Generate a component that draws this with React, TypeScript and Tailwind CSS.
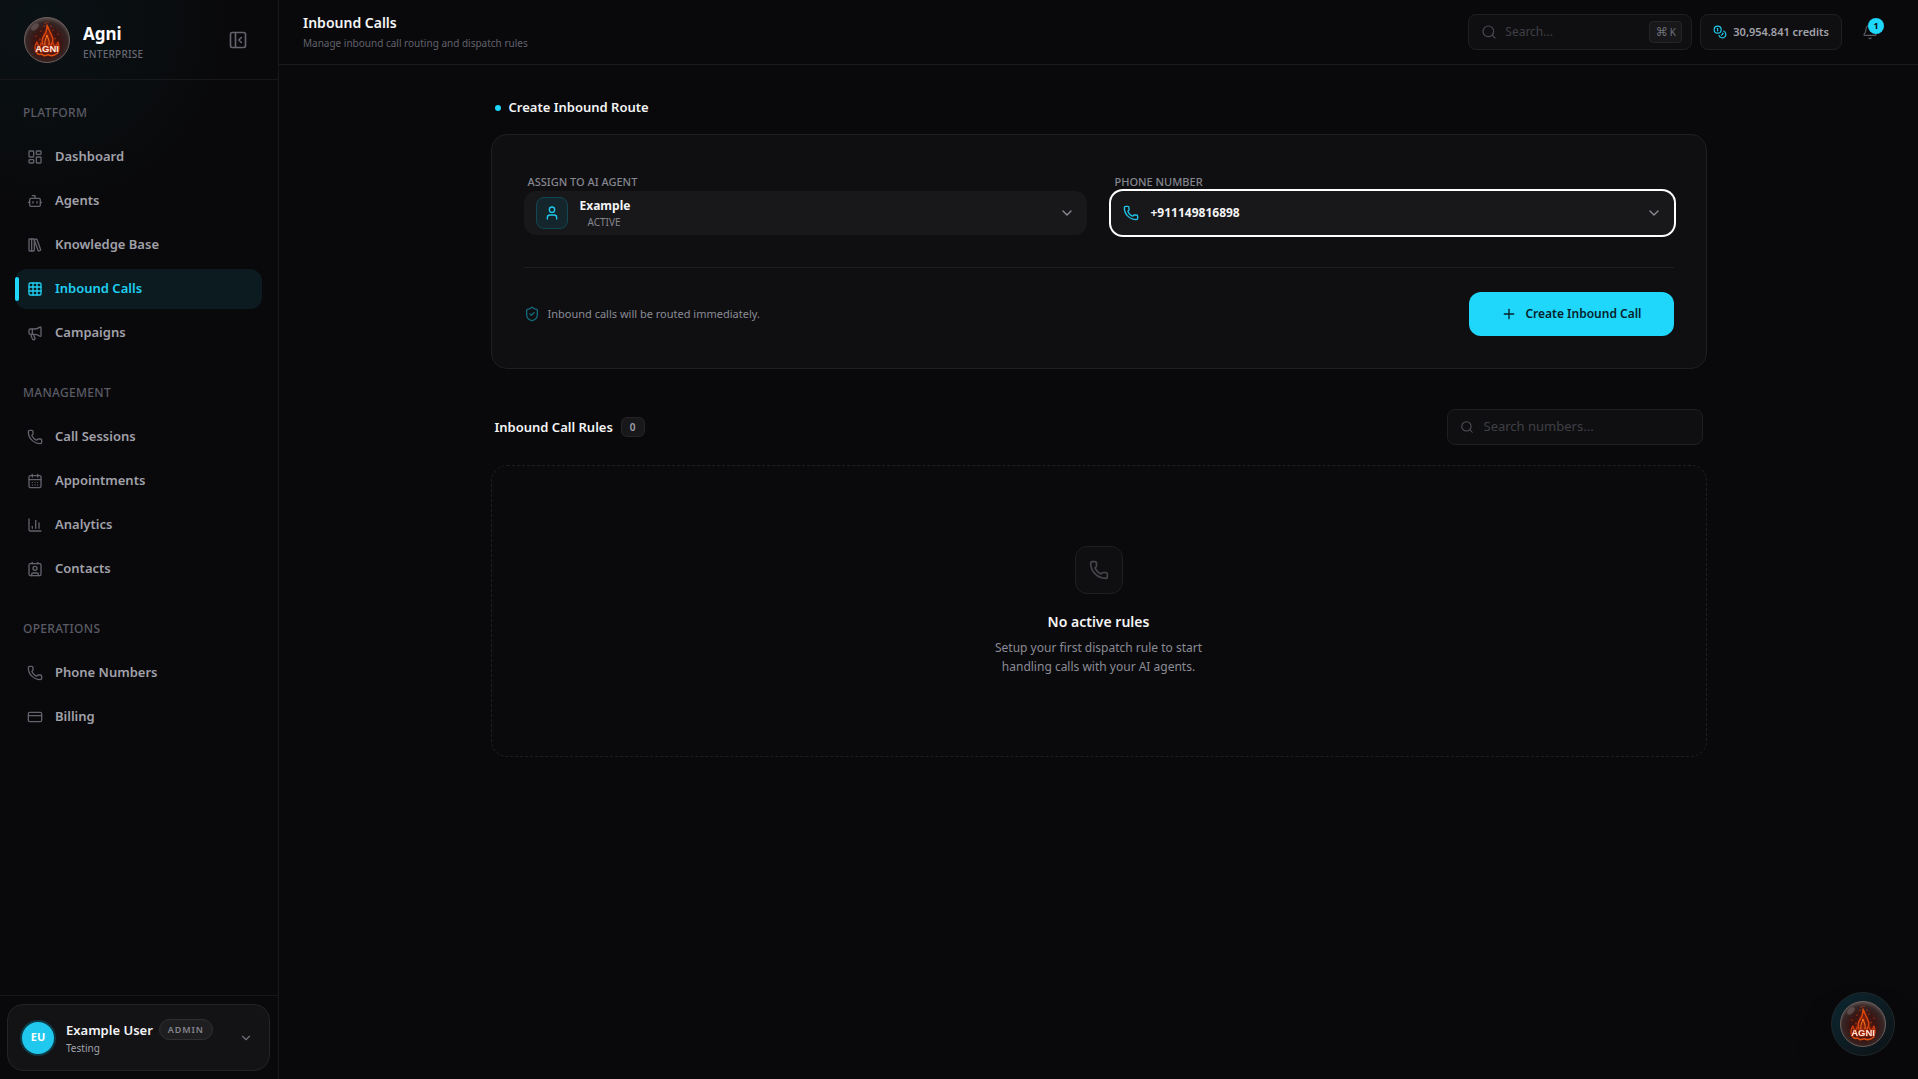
import React, { useState } from 'react';
import {
  Bell,
  Bot,
  CalendarDays,
  ChartColumn,
  ChevronDown,
  Coins,
  Contact,
  CreditCard,
  Grid3x3,
  LayoutDashboard,
  LibraryBig,
  LucideIcon,
  Megaphone,
  PanelLeftClose,
  Phone,
  Plus,
  Search,
  ShieldCheck,
  User,
} from 'lucide-react';

interface NavItem {
  label: string;
  icon: LucideIcon;
}

interface NavSection {
  title: string;
  items: NavItem[];
}

const sections: NavSection[] = [
  {
    title: 'Platform',
    items: [
      { label: 'Dashboard', icon: LayoutDashboard },
      { label: 'Agents', icon: Bot },
      { label: 'Knowledge Base', icon: LibraryBig },
      { label: 'Inbound Calls', icon: Grid3x3 },
      { label: 'Campaigns', icon: Megaphone },
    ],
  },
  {
    title: 'Management',
    items: [
      { label: 'Call Sessions', icon: Phone },
      { label: 'Appointments', icon: CalendarDays },
      { label: 'Analytics', icon: ChartColumn },
      { label: 'Contacts', icon: Contact },
    ],
  },
  {
    title: 'Operations',
    items: [
      { label: 'Phone Numbers', icon: Phone },
      { label: 'Billing', icon: CreditCard },
    ],
  },
];

const AgniLogo: React.FC<{ id: string; className: string }> = ({ id, className }) => (
  <svg viewBox="0 0 46 46" className={className} role="img" aria-label="Agni logo">
    <defs>
      <radialGradient id={`${id}-orb`} cx="50%" cy="56%" r="56%">
        <stop offset="0%" stopColor="#5c140a" />
        <stop offset="50%" stopColor="#3a1411" />
        <stop offset="82%" stopColor="#352626" />
        <stop offset="100%" stopColor="#5f5150" />
      </radialGradient>
      <radialGradient id={`${id}-glow`}>
        <stop offset="0%" stopColor="#b82c0a" stopOpacity="0.85" />
        <stop offset="100%" stopColor="#7a1a08" stopOpacity="0" />
      </radialGradient>
    </defs>
    <circle cx="23" cy="23" r="22.5" fill={`url(#${id}-orb)`} stroke="#6f5f5c" strokeWidth="1" />
    <ellipse cx="11" cy="10" rx="4.5" ry="2.5" fill="#a08f8c" opacity="0.35" transform="rotate(-40 11 10)" />
    <ellipse cx="23" cy="30" rx="14" ry="10" fill={`url(#${id}-glow)`} />
    <ellipse cx="23.5" cy="20" rx="6" ry="12" fill={`url(#${id}-glow)`} />
    {/* flame strands */}
    <g fill="none" strokeLinecap="round" strokeLinejoin="round">
      <path
        d="M19 28c-2-5 0-8 2-11 2-3 2-6 2-9 2 4 2 6 4 9 2 4 3 7 0 11"
        stroke="#d8480f"
        strokeWidth="1.5"
      />
      <path d="M21 28c-1-4 1-6 2-10 1 4 3 6 2 10" stroke="#f57a22" strokeWidth="1" />
      <path
        d="M12 35c-2-4-1-7 1-10 0 3 2 3 2 6 1-2 2-3 2-5M34 35c2-4 1-7 0-10-1 3-2 3-3 6 0-2-1-3-2-5"
        stroke="#c93a0c"
        strokeWidth="1.4"
      />
      <path d="M13 36c2 3 4 0 6 2s4-1 6 0 5 1 9-2" stroke="#e2500f" strokeWidth="1.5" />
      <path d="M16 22v1M31 21v1M12 19v.5M34 17v.5M20 9v.5M27 9v.5M24 5v.5M21 6h1M29 13v.5M17 14v.5" stroke="#c23a14" strokeWidth="1" />
    </g>
    <text
      x="23"
      y="35"
      textAnchor="middle"
      fontFamily="'Liberation Sans', sans-serif"
      fontWeight="700"
      fontSize="9.5"
      fill="#fbe4d8"
      stroke="#b8300c"
      strokeWidth="1"
      paintOrder="stroke"
    >
      AGNI
    </text>
  </svg>
);

const Sidebar: React.FC = () => {
  const [active, setActive] = useState('Inbound Calls');

  return (
    <aside className="flex w-[279px] shrink-0 flex-col border-r border-[#18181a] bg-[radial-gradient(circle_at_40px_20px,#0a1215_0px,#09090b_190px)]">
      <div className="flex h-20 shrink-0 items-center border-b border-[#18181a] pr-[30px] pl-6">
        <AgniLogo id="brand" className="size-[46px]" />
        <div className="ml-[13px] flex-1">
          <div className="text-[17px] leading-7 font-bold text-white">Agni</div>
          <div className="text-[10px] leading-3 font-medium tracking-wide text-[#686872]">ENTERPRISE</div>
        </div>
        <button type="button" aria-label="Collapse sidebar" className="text-[#62626c]">
          <PanelLeftClose className="size-5" />
        </button>
      </div>

      <nav className="flex flex-1 flex-col gap-8 pt-[25px] pr-4 pl-[15px]">
        {sections.map((section) => (
          <div key={section.title}>
            <h2 className="mb-4 pl-2 text-[12px] leading-4 font-medium tracking-wide text-[#5b5b65] uppercase">
              {section.title}
            </h2>
            <div className="flex flex-col gap-1">
              {section.items.map(({ label, icon: Icon }) => {
                const isActive = label === active;
                return (
                  <a
                    key={label}
                    href="#"
                    onClick={() => setActive(label)}
                    className={`relative flex h-10 items-center gap-3 rounded-xl px-3 text-[13px] font-semibold ${
                      isActive ? 'bg-[#0c1b20] text-[#1fd0f3]' : 'text-[#a1a1aa]'
                    }`}
                  >
                    {isActive && <span className="absolute top-2 left-0 h-6 w-1 rounded-full bg-[#1fd6fb]" />}
                    <Icon className={`size-4 ${isActive ? '' : 'text-[#62626c]'}`} />
                    {label}
                  </a>
                );
              })}
            </div>
          </div>
        ))}
      </nav>

      <div className="border-t border-[#18181a] py-2 pr-2 pl-[7px]">
        <button
          type="button"
          className="flex w-full items-center rounded-2xl border border-[#242427] bg-[#131315] py-[14px] pr-4 pl-[14px] text-left"
        >
          <span className="flex size-8 items-center justify-center rounded-full bg-[#1fc8ec] text-[11px] font-bold text-white ring-2 ring-[#0e3a45]">
            EU
          </span>
          <span className="ml-3 flex-1">
            <span className="flex items-center gap-[6px]">
              <span className="text-[13px] leading-5 font-semibold text-[#f4f4f5]">Example User</span>
              <span className="rounded-full border border-[#303033] bg-[#1e1e20] px-2 text-[9px] leading-[19px] font-semibold tracking-widest text-[#85858e]">
                ADMIN
              </span>
            </span>
            <span className="block text-[10px] leading-4 text-[#a1a1aa]">Testing</span>
          </span>
          <ChevronDown className="size-[14px] text-[#71717a]" />
        </button>
      </div>
    </aside>
  );
};

const TopBar: React.FC = () => (
  <header className="flex h-[65px] shrink-0 items-center border-b border-[#1b1b1d] pr-10 pl-6">
    <div className="flex-1">
      <h1 className="text-[14px] leading-5 font-semibold text-[#f4f4f5]">Inbound Calls</h1>
      <p className="mt-[2px] text-[10px] leading-4 text-[#62626c]">Manage inbound call routing and dispatch rules</p>
    </div>
    <div className="flex items-center gap-2">
      <label className="flex h-9 w-56 items-center rounded-lg border border-[#1f1f22] bg-[#0f0f11] pr-[9px] pl-3">
        <Search className="size-4 text-[#4a4a52]" strokeWidth={1.75} />
        <input
          type="text"
          aria-label="Search"
          placeholder="Search..."
          className="ml-2 min-w-0 flex-1 bg-transparent text-[12px] outline-none placeholder:text-[#3f3f46]"
        />
        <kbd className="flex h-[22px] w-[33px] items-center justify-center gap-[2px] rounded border border-[#252528] bg-[#18181b] font-['Noto_Sans','DejaVu_Sans',sans-serif] text-[10px] text-[#70707a]">
          <span className="text-[12px]">⌘</span>
          <span>K</span>
        </kbd>
      </label>
      <a
        href="#"
        className="flex h-9 items-center gap-[6px] rounded-lg border border-[#1f1f22] bg-[#0f0f11] px-3 text-[11px] font-semibold text-[#a1a1aa]"
      >
        <Coins className="size-[14px] text-[#1fc8ec]" />
        30,954.841 credits
      </a>
      <button type="button" aria-label="Notifications" className="relative ml-3 text-[#5b5b65]">
        <Bell className="size-4" strokeWidth={1.75} />
        <span className="absolute -top-[6px] left-[6px] flex size-4 items-center justify-center rounded-full bg-[#1fd6fb] text-[9px] font-bold text-[#09090b]">
          1
        </span>
      </button>
    </div>
  </header>
);

const CreateRoute: React.FC = () => (
  <section>
    <h2 className="flex items-center gap-2 pl-1 text-[13px] leading-[21px] font-semibold text-[#f4f4f5]">
      <span className="size-[6px] rounded-full bg-[#1fd6fb]" />
      Create Inbound Route
    </h2>
    <div className="mt-4 rounded-2xl border border-[#1f1f22] bg-[#0f0f11] px-8 pt-[38px] pb-8">
      <div className="grid grid-cols-2 gap-6">
        <div>
          <label htmlFor="agent" className="block pl-1 text-[11px] leading-[18px] font-medium text-[#85858f]">
            ASSIGN TO AI AGENT
          </label>
          <button id="agent" type="button" className="flex h-11 w-full items-center rounded-xl bg-[#18181a] px-3 text-left">
            <span className="flex size-8 items-center justify-center rounded-lg border border-[#124854] bg-[#14262b] text-[#1fc8ec]">
              <User className="size-4" />
            </span>
            <span className="ml-3 flex-1">
              <span className="block text-[12px] leading-[18px] font-bold text-[#f4f4f5]">Example</span>
              <span className="block pl-2 text-[10px] leading-[14px] text-[#85858f]">ACTIVE</span>
            </span>
            <ChevronDown className="size-4 text-[#8b8b94]" />
          </button>
        </div>
        <div>
          <label htmlFor="phone" className="block pl-1 text-[11px] leading-[18px] font-medium text-[#85858f]">
            PHONE NUMBER
          </label>
          <button
            id="phone"
            type="button"
            className="flex h-11 w-full items-center rounded-xl bg-[#18181a] px-3 text-left ring-2 ring-white"
          >
            <Phone className="size-4 text-[#1fc8ec]" />
            <span className="ml-3 flex-1 text-[12px] font-bold text-[#f4f4f5]">+911149816898</span>
            <ChevronDown className="size-4 text-[#8b8b94]" />
          </button>
        </div>
      </div>
      <div className="mt-8 flex items-center justify-between border-t border-[#1f1f22] pt-6">
        <p className="flex items-center gap-2 text-[11px] text-[#8b8b95]">
          <ShieldCheck className="size-4 text-[#12697a]" />
          Inbound calls will be routed immediately.
        </p>
        <button
          type="button"
          className="flex h-11 items-center gap-2 rounded-xl bg-[#1fd6fb] px-8 text-[12px] font-semibold text-[#06232b]"
        >
          <Plus className="size-4" />
          Create Inbound Call
        </button>
      </div>
    </div>
  </section>
);

const RulesList: React.FC = () => (
  <section className="mt-10">
    <div className="flex items-center justify-between px-1">
      <h2 className="flex items-center gap-2 text-[13px] leading-5 font-semibold text-[#f4f4f5]">
        Inbound Call Rules
        <span className="rounded-md border border-[#252528] bg-[#18181b] px-2 text-[10px] leading-[18px] text-[#a1a1aa]">0</span>
      </h2>
      <label className="flex h-9 w-64 items-center rounded-lg border border-[#1f1f22] bg-[#0f0f11] px-3">
        <Search className="size-[14px] text-[#52525b]" strokeWidth={1.75} />
        <input
          type="text"
          aria-label="Search numbers"
          placeholder="Search numbers..."
          className="ml-[10px] min-w-0 flex-1 bg-transparent text-[13px] outline-none placeholder:text-[#3f3f46]"
        />
      </label>
    </div>
    <div className="mt-5 flex flex-col items-center rounded-2xl border border-dashed border-[#1f1f22] bg-[#0a0a0c] py-20 text-center">
      <div className="flex size-12 items-center justify-center rounded-xl border border-[#1f1f22] bg-[#0f0f11]">
        <Phone className="size-5 text-[#46464d]" />
      </div>
      <h3 className="mt-4 text-[14px] leading-6 font-semibold text-[#f4f4f5]">No active rules</h3>
      <p className="mt-1 w-60 text-[12px] leading-[19px] text-[#8b8b95]">
        Setup your first dispatch rule to start handling calls with your AI agents.
      </p>
    </div>
  </section>
);

const App: React.FC = () => {
  return (
    <div className="flex min-h-screen bg-[#09090b] font-['Noto_Sans',sans-serif]">
      <Sidebar />
      <div className="flex min-w-0 flex-1 flex-col">
        <TopBar />
        <main className="mx-auto w-full max-w-7xl px-8 py-8">
          <CreateRoute />
          <RulesList />
        </main>
      </div>
      <button
        type="button"
        aria-label="Open assistant"
        className="fixed right-[23px] bottom-[23px] flex size-16 items-center justify-center rounded-full border border-[#20282b] bg-linear-to-br from-[#0b2731] to-[#0c1215] shadow-2xl"
      >
        <AgniLogo id="fab" className="size-[46px]" />
      </button>
    </div>
  );
};

export default App;
